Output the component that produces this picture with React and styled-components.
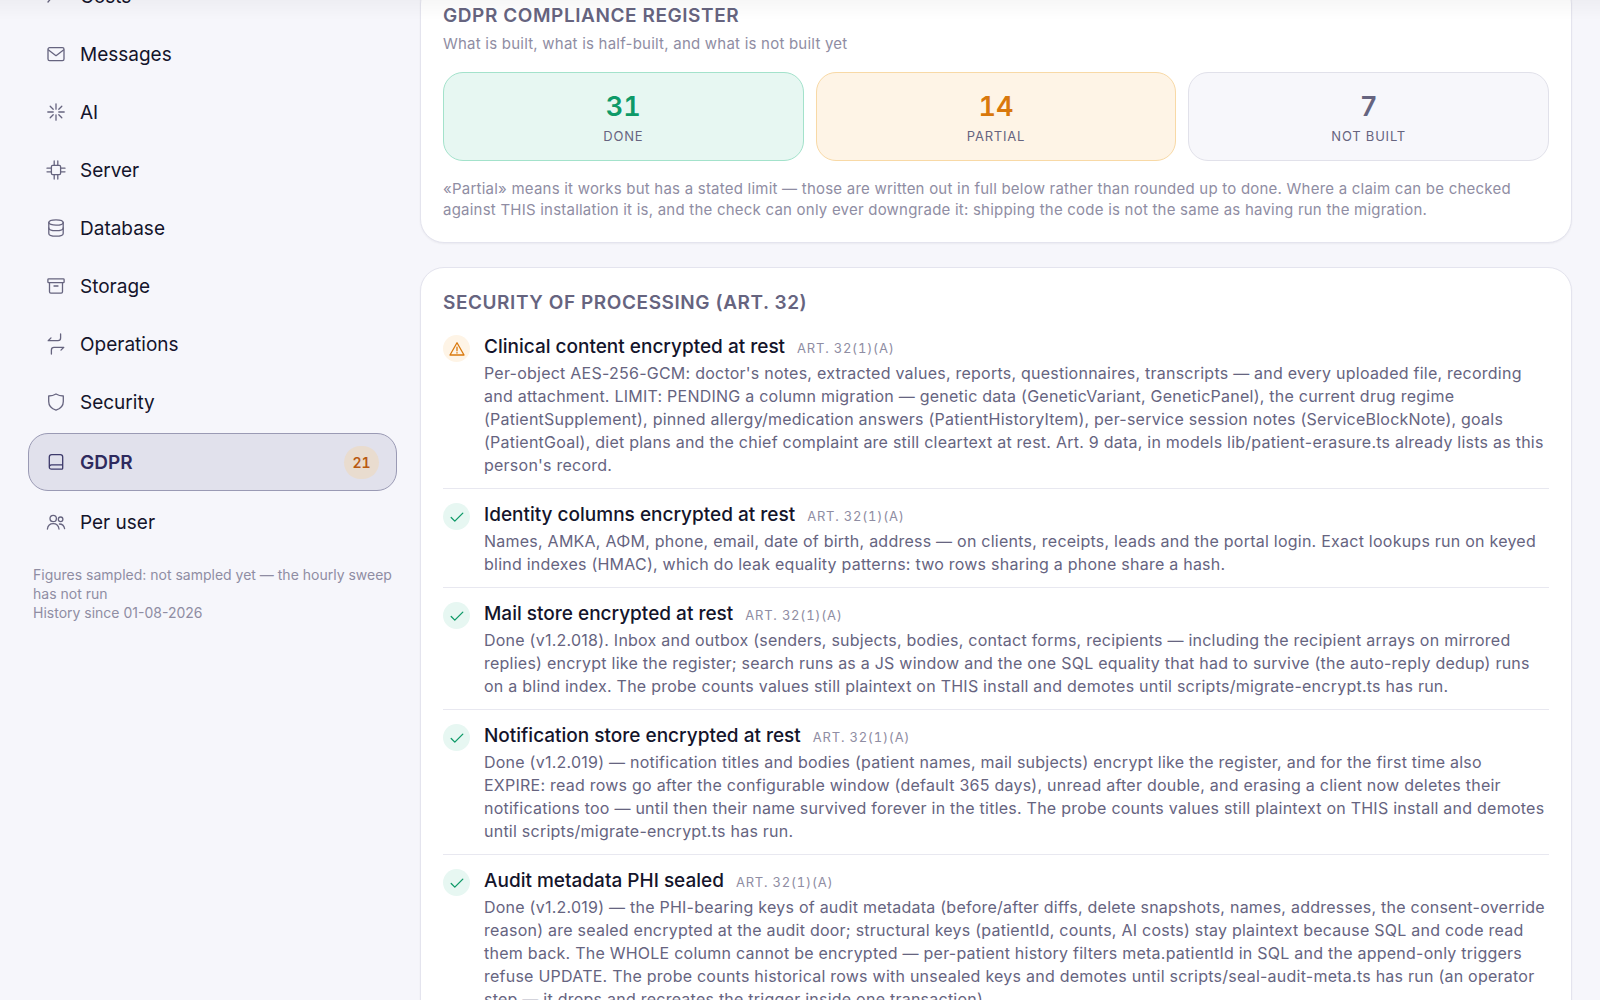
import React from "react";
import styled, { createGlobalStyle, css } from "styled-components";

const icons = {
  costs: (
    <>
      <path d="M2 16l5-6 4 3 7-8" />
      <path d="M13 5h5v5" />
    </>
  ),
  messages: (
    <>
      <rect x="2" y="3.7" width="16" height="13" rx="1.6" />
      <path d="M2.5 6l7.5 5.7L17.5 6" />
    </>
  ),
  ai: (
    <path d="M10 1.8v5.4M10 12.8v5.4M1.8 10h5.4M12.8 10h5.4M4.2 4.2l3 3M12.8 12.8l3 3M4.2 15.8l3-3M12.8 7.2l3-3" />
  ),
  server: (
    <>
      <rect x="5.4" y="5.4" width="9.2" height="9.2" rx="1.3" />
      <path d="M8.2 5V1M11.8 5V1M8.2 19v-4M11.8 19v-4M5 8.2H1M5 11.8H1M19 8.2h-4M19 11.8h-4" />
    </>
  ),
  database: (
    <>
      <ellipse cx="10" cy="4.5" rx="7.2" ry="2.7" />
      <path d="M2.8 4.5v11c0 1.5 3.2 2.7 7.2 2.7s7.2-1.2 7.2-2.7v-11" />
      <path d="M2.8 10c0 1.5 3.2 2.7 7.2 2.7s7.2-1.2 7.2-2.7" />
    </>
  ),
  storage: (
    <>
      <rect x="1.9" y="2.8" width="16.2" height="3.9" rx="0.8" />
      <path d="M3.5 6.7v9.1c0 .8.5 1.3 1.3 1.3h10.4c.8 0 1.3-.5 1.3-1.3V6.7M8 10h4" />
    </>
  ),
  operations: (
    <>
      <path d="M14.6 0v4.100c0 1.800-.8 2.600-2.600 2.600H2.200L5 3.900" />
      <path d="M5.400 20v-4.100c0-1.800.8-2.600 2.600-2.600h9.800L15 16.100" />
    </>
  ),
  security: (
    <path d="M10 2c2.300 1.400 4.700 2 7.300 2v5.500c0 4.300-2.700 7.200-7.300 8.700-4.600-1.500-7.300-4.400-7.300-8.700V4C5.300 4 7.700 3.400 10 2Z" />
  ),
  gdpr: (
    <path d="M3.300 15V5c0-1.600.8-2.400 2.400-2.400h8.600c1.600 0 2.400.8 2.400 2.400v11.200c0 .6-.4 1-1 1H5.500c-1.300 0-2.200-.9-2.200-2.200s.9-2.200 2.200-2.200h11.200" />
  ),
  users: (
    <>
      <circle cx="7.200" cy="6.500" r="3.200" />
      <circle cx="14.600" cy="7.300" r="2.300" />
      <path d="M1.400 17c.5-3.500 2.600-5.300 5.800-5.300s5.300 1.800 5.800 5.300M13.400 12c2.700 0 4.600 1.500 5.200 4.600" />
    </>
  ),
};

const navItems = [
  { id: "costs", label: "Costs" },
  { id: "messages", label: "Messages" },
  { id: "ai", label: "AI" },
  { id: "server", label: "Server" },
  { id: "database", label: "Database" },
  { id: "storage", label: "Storage" },
  { id: "operations", label: "Operations" },
  { id: "security", label: "Security" },
  { id: "gdpr", label: "GDPR", badge: 21 },
  { id: "users", label: "Per user" },
];

const stats = [
  { value: 31, label: "Done", tone: "done" },
  { value: 14, label: "Partial", tone: "partial" },
  { value: 7, label: "Not built", tone: "none" },
];

const measures = [
  {
    status: "partial",
    title: "Clinical content encrypted at rest",
    text: "Per-object AES-256-GCM: doctor's notes, extracted values, reports, questionnaires, transcripts — and every uploaded file, recording and attachment. LIMIT: PENDING a column migration — genetic data (GeneticVariant, GeneticPanel), the current drug regime (PatientSupplement), pinned allergy/medication answers (PatientHistoryItem), per-service session notes (ServiceBlockNote), goals (PatientGoal), diet plans and the chief complaint are still cleartext at rest. Art. 9 data, in models lib/patient-erasure.ts already lists as this person's record.",
  },
  {
    status: "done",
    title: "Identity columns encrypted at rest",
    text: "Names, ΑΜΚΑ, ΑΦΜ, phone, email, date of birth, address — on clients, receipts, leads and the portal login. Exact lookups run on keyed blind indexes (HMAC), which do leak equality patterns: two rows sharing a phone share a hash.",
  },
  {
    status: "done",
    title: "Mail store encrypted at rest",
    text: "Done (v1.2.018). Inbox and outbox (senders, subjects, bodies, contact forms, recipients — including the recipient arrays on mirrored replies) encrypt like the register; search runs as a JS window and the one SQL equality that had to survive (the auto-reply dedup) runs on a blind index. The probe counts values still plaintext on THIS install and demotes until scripts/migrate-encrypt.ts has run.",
  },
  {
    status: "done",
    title: "Notification store encrypted at rest",
    text: "Done (v1.2.019) — notification titles and bodies (patient names, mail subjects) encrypt like the register, and for the first time also\nEXPIRE: read rows go after the configurable window (default 365 days), unread after double, and erasing a client now deletes their notifications too — until then their name survived forever in the titles. The probe counts values still plaintext on THIS install and demotes until scripts/migrate-encrypt.ts has run.",
  },
  {
    status: "done",
    title: "Audit metadata PHI sealed",
    text: "Done (v1.2.019) — the PHI-bearing keys of audit metadata (before/after diffs, delete snapshots, names, addresses, the consent-override reason) are sealed encrypted at the audit door; structural keys (patientId, counts, AI costs) stay plaintext because SQL and code read them back. The WHOLE column cannot be encrypted — per-patient history filters meta.patientId in SQL and the append-only triggers refuse UPDATE. The probe counts historical rows with unsealed keys and demotes until scripts/seal-audit-meta.ts has run (an operator step — it drops and recreates the trigger inside one transaction).",
  },
];

const StatusIcon = ({ status }) => (
  <StatusDot $status={status}>
    <svg width="18" height="18" viewBox="0 0 18 18" aria-hidden="true">
      {status === "done" ? (
        <path d="M3.200 9.500l3.600 3.600 8-8" />
      ) : (
        <path d="M9 2.700 16 15H2L9 2.700ZM9 7.200v3.600M9 12.600v.5" />
      )}
    </svg>
  </StatusDot>
);

const App = () => {
  return (
    <>
      <GlobalStyle />
      <HeaderShadow />
      <Page>
        <Sidebar>
          <Nav aria-label="Admin sections">
            {navItems.map((item) => (
              <NavLink
                key={item.id}
                href={`#${item.id}`}
                $active={item.id === "gdpr"}
              >
                <NavIcon
                  viewBox="0 0 20 20"
                  aria-hidden="true"
                  $active={item.id === "gdpr"}
                >
                  {icons[item.id]}
                </NavIcon>
                <span>{item.label}</span>
                {item.badge && <Badge>{item.badge}</Badge>}
              </NavLink>
            ))}
          </Nav>
          <SampleNote>
            Figures sampled: not sampled yet — the hourly sweep has not run
            <br />
            History since 01-08-2026
          </SampleNote>
        </Sidebar>
        <Main>
          <Card>
            <CardTitle>GDPR compliance register</CardTitle>
            <Subtitle>
              What is built, what is half-built, and what is not built yet
            </Subtitle>
            <Stats>
              {stats.map((stat) => (
                <Stat key={stat.tone} $tone={stat.tone}>
                  <strong>{stat.value}</strong>
                  <span>{stat.label}</span>
                </Stat>
              ))}
            </Stats>
            <Footnote>
              «Partial» means it works but has a stated limit — those are
              written out in full below rather than rounded up to done. Where a
              claim can be checked against THIS installation it is, and the
              check can only ever downgrade it: shipping the code is not the
              same as having run the migration.
            </Footnote>
          </Card>
          <Card>
            <CardTitle>Security of processing (Art. 32)</CardTitle>
            <MeasureList>
              {measures.map((measure) => (
                <Measure key={measure.title}>
                  <StatusIcon status={measure.status} />
                  <div>
                    <MeasureHead>
                      <h3>{measure.title}</h3>
                      <span>Art. 32(1)(a)</span>
                    </MeasureHead>
                    <p>{measure.text}</p>
                  </div>
                </Measure>
              ))}
            </MeasureList>
          </Card>
        </Main>
      </Page>
    </>
  );
};

const GlobalStyle = createGlobalStyle`
  * {
    box-sizing: border-box;
    margin: 0;
    padding: 0;
  }

  html {
    overflow: hidden;
  }

  body {
    background-color: #f6f6fb;
    color: #14142b;
    font-family: Inter, "Liberation Sans", sans-serif;
    font-size: 16px;
  }
`;

const HeaderShadow = styled.div`
  position: fixed;
  z-index: 2;
  top: 0;
  left: 0;
  right: 0;
  height: 20px;
  background: linear-gradient(rgba(0, 0, 0, 0.03), rgba(0, 0, 0, 0));
  pointer-events: none;
`;

const Page = styled.div`
  display: grid;
  grid-template-columns: 369px minmax(0, 1fr);
  gap: 23px;
  margin-top: -31px;
  padding: 0 28px;
`;

const Sidebar = styled.aside`
  min-width: 0;
`;

const Nav = styled.nav`
  display: flex;
  flex-direction: column;
  gap: 4px;
`;

const NavLink = styled.a`
  display: flex;
  align-items: center;
  gap: 14px;
  min-height: 54px;
  padding: 0 17px;
  border: 1px solid transparent;
  border-radius: 20px;
  color: #14142b;
  font-size: 19px;
  text-decoration: none;

  ${({ $active }) =>
    $active &&
    css`
      min-height: 58px;
      border-color: #9a9ab4;
      background-color: #e1e1ec;
      color: #2e2a5e;
      font-weight: 600;
    `}
`;

const NavIcon = styled.svg`
  width: 20px;
  height: 20px;
  overflow: visible;
  fill: none;
  stroke: ${({ $active }) => ($active ? "#3d3a6b" : "#66647f")};
  stroke-width: 1.3;
  stroke-linecap: round;
  stroke-linejoin: round;
`;

const Badge = styled.span`
  display: grid;
  place-items: center;
  min-width: 35px;
  height: 33px;
  margin-left: auto;
  border-radius: 17px;
  background-color: #e9dccf;
  color: #b95a12;
  font-size: 14px;
  font-variant-numeric: tabular-nums;
  font-weight: 600;
`;

const SampleNote = styled.p`
  padding: 16px 5px 0;
  color: #8f8da3;
  font-size: 14px;
  line-height: 19px;
`;

const Main = styled.main`
  display: flex;
  flex-direction: column;
  gap: 24px;
  min-width: 0;
  padding-top: 11px;
`;

const Card = styled.section`
  padding: 22px;
  border: 1px solid #e4e4ee;
  border-radius: 24px;
  background-color: #fff;
  box-shadow: 0 1px 2px rgba(20, 20, 43, 0.05);
`;

const CardTitle = styled.h2`
  color: #66647f;
  font-size: 19px;
  font-weight: 600;
  letter-spacing: 0.03em;
  line-height: 26px;
  text-transform: uppercase;
`;

const Subtitle = styled.p`
  margin-top: 4px;
  color: #8f8da3;
  font-size: 15px;
  letter-spacing: 0.015em;
  line-height: 21px;
`;

const Stats = styled.div`
  display: grid;
  grid-template-columns: repeat(3, 1fr);
  gap: 12px;
  margin: 18px 0 17px;
`;

const tones = {
  done: { color: "#0e9a68", border: "#a3e2cb", background: "#e7f7f2" },
  partial: { color: "#d9780c", border: "#f8d9a6", background: "#fef4e6" },
  none: { color: "#66647f", border: "#e1e1ea", background: "#f7f7fb" },
};

const Stat = styled.div`
  display: flex;
  flex-direction: column;
  align-items: center;
  gap: 2px;
  padding: 17px 16px 14px;
  border: 1px solid ${({ $tone }) => tones[$tone].border};
  border-radius: 20px;
  background-color: ${({ $tone }) => tones[$tone].background};

  strong {
    color: ${({ $tone }) => tones[$tone].color};
    font-size: 27px;
    font-variant-numeric: tabular-nums;
    font-weight: 600;
    line-height: 34px;
  }

  span {
    color: #66647f;
    font-size: 13px;
    letter-spacing: 0.06em;
    line-height: 20px;
    text-transform: uppercase;
  }
`;

const Footnote = styled.p`
  color: #8f8da3;
  font-size: 15px;
  letter-spacing: 0.015em;
  line-height: 21px;
`;

const MeasureList = styled.ul`
  margin-top: 5px;
  list-style: none;
`;

const Measure = styled.li`
  display: flex;
  gap: 14px;
  padding: 12px 0 11px;

  & + & {
    border-top: 1px solid #e8e8f0;
  }

  p {
    margin-top: 1px;
    color: #66647f;
    font-size: 16px;
    letter-spacing: 0.015em;
    line-height: 23px;
    white-space: pre-line;
  }
`;

const MeasureHead = styled.div`
  display: flex;
  align-items: baseline;
  gap: 12px;

  h3 {
    font-size: 19px;
    font-weight: 500;
    line-height: 28px;
  }

  span {
    color: #8f8da3;
    font-size: 13px;
    font-variant-numeric: tabular-nums;
    letter-spacing: 0.06em;
    text-transform: uppercase;
  }
`;

const StatusDot = styled.span`
  display: grid;
  flex: none;
  place-items: center;
  width: 27px;
  height: 27px;
  margin-top: 2px;
  border-radius: 50%;
  background-color: ${({ $status }) => tones[$status].background};

  svg {
    fill: none;
    stroke: ${({ $status }) => tones[$status].color};
    stroke-width: 1.3;
    stroke-linecap: round;
    stroke-linejoin: round;
  }
`;

export default App;
